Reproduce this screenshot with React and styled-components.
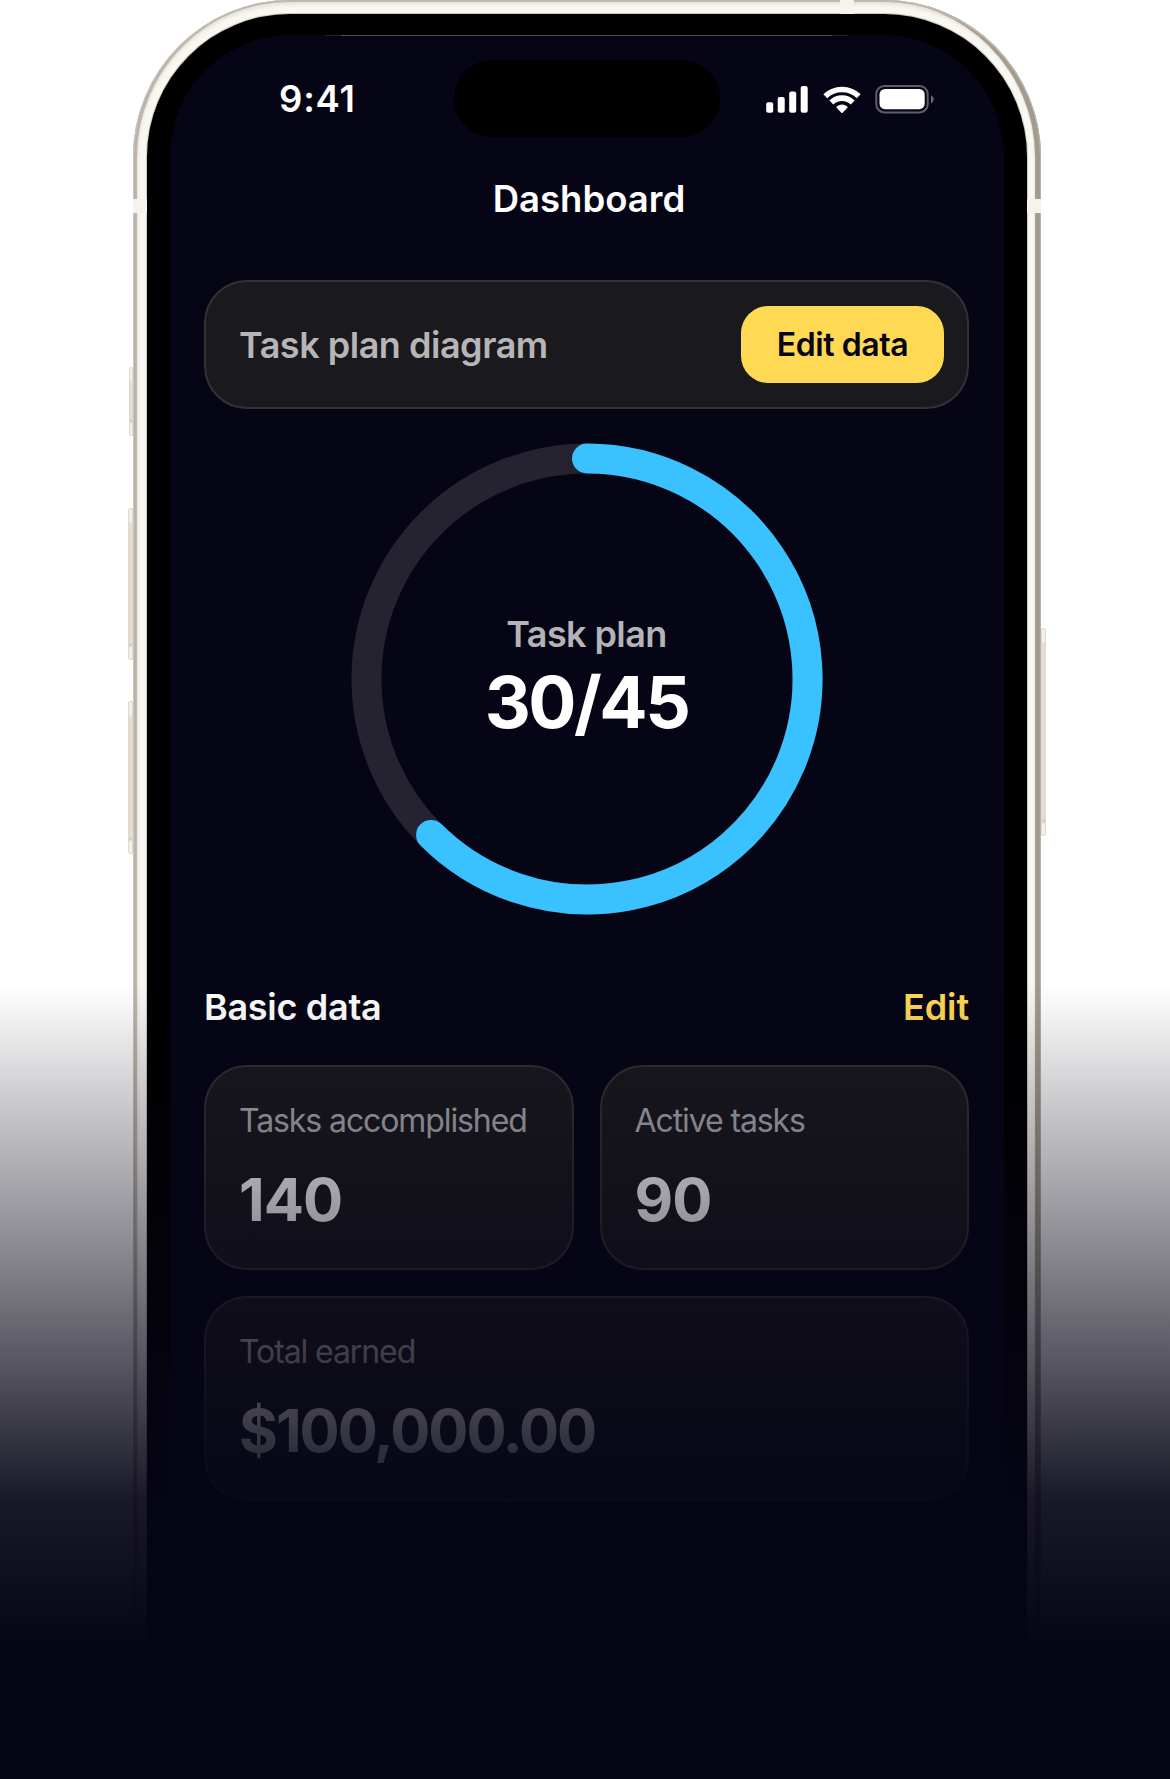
import React from "react";
import styled, { createGlobalStyle } from "styled-components";

const GlobalStyle = createGlobalStyle`
  *, *::before, *::after { box-sizing: border-box; }
  html, body { margin: 0; background: #ffffff; }
  body { font-family: Inter, "Liberation Sans", sans-serif; -webkit-font-smoothing: antialiased; }
`;

const Stage = styled.main`
  position: relative;
  display: flex;
  width: 1170px;
  height: 1779px;
  padding-left: 133px;
  overflow: hidden;
  background: #ffffff;
`;

const Phone = styled.div`
  position: relative;
  flex: none;
  width: 908px;
  height: 1900px;
  padding: 14px 14px 0;
  border-radius: 157px;
  background: #f9f7f2;
  box-shadow:
    inset 1px 0 0 #c9c5c0,
    inset 0 2px 0 #bcb9af,
    inset 4px 0 1px #bbb3aa,
    inset -1px 0 0 #b9b1a5,
    inset -6px 0 1px #a29a8d,
    inset 0 0 3px 5px #eae5dd;
`;

const Bezel = styled.div`
  height: 100%;
  padding: 21px 23px 0;
  border-radius: 143px;
  background: #000000;
  box-shadow: 0 0 0 1px #cfc8bb;
`;

const Screen = styled.div`
  position: relative;
  height: 100%;
  padding: 25px 35px 0 34px;
  border-radius: 121px;
  background: #060515;
`;

const Glint = styled.i`
  position: absolute;
  top: 0;
  left: 155px;
  width: 523px;
  height: 1px;
  background: linear-gradient(90deg, #24242c 16px, #4a4a50 16px, #4a4a50 507px, #24242c 507px);
`;

const SideKey = styled.i`
  position: absolute;
  ${(p) => (p.$side === "left" ? `left: -${p.$depth}px;` : `right: -${p.$depth}px;`)}
  top: ${(p) => p.$top}px;
  width: ${(p) => p.$depth}px;
  height: ${(p) => p.$length}px;
  border: 1px solid #dedad1;
  border-radius: ${(p) => (p.$side === "left" ? "2px 0 0 2px" : "0 2px 2px 0")};
  background: linear-gradient(180deg, #f3f0ea 12px, #e5ddd0 15px, #e5ddd0 calc(100% - 16px), #cfc7ba calc(100% - 14px), #f3f0ea calc(100% - 11px));
`;

const Antenna = styled.i`
  position: absolute;
  left: ${(p) => p.$left}px;
  top: ${(p) => p.$top}px;
  width: 14px;
  height: 14px;
  background: #f4f3ee;
`;

const StatusBar = styled.header`
  display: grid;
  grid-template-columns: 1fr 266px 1fr;
  align-items: center;
  height: 77px;
  margin: 0 -35px 0 -34px;
`;

const Clock = styled.time`
  padding: 2px 0 0 109px;
  color: #ffffff;
  font-size: 36.5px;
  font-weight: 600;
  letter-spacing: 0.8px;
  line-height: 75px;
`;

const Island = styled.div`
  height: 77px;
  border-radius: 39px;
  background: #000000;
`;

const StatusIcons = styled.svg`
  display: block;
  width: 170px;
  height: 30px;
  margin: 3px 0 0 46px;
`;

const Title = styled.h1`
  margin: 37px 0 0;
  padding-left: 5px;
  color: #ffffff;
  font-size: 36.5px;
  font-weight: 600;
  letter-spacing: 0;
  line-height: 50px;
  text-align: center;
`;

const PlanBar = styled.section`
  display: flex;
  align-items: center;
  justify-content: space-between;
  height: 129px;
  margin-top: 56px;
  padding: 0 23px 0 33px;
  border: 2px solid #323136;
  border-radius: 43px;
  background: #1a191e;
`;

const PlanLabel = styled.span`
  color: #b6b5b8;
  font-size: 36px;
  font-weight: 600;
  letter-spacing: -0.48px;
`;

const EditButton = styled.button`
  width: 203px;
  height: 77px;
  padding: 0;
  border: 0;
  border-radius: 27px;
  background: #ffd854;
  color: #060515;
  font: 600 32px Inter, sans-serif;
  letter-spacing: -0.4px;
`;

const Ring = styled.section`
  display: grid;
  place-items: center;
  height: 472px;
  margin-top: 34px;
  > * { grid-area: 1 / 1; }
`;

const RingChart = styled.svg`
  display: block;
  width: 472px;
  height: 472px;
`;

const RingText = styled.div`
  display: flex;
  flex-direction: column;
  align-items: center;
`;

const RingLabel = styled.span`
  color: #b4b4b8;
  font-size: 36px;
  font-weight: 600;
  letter-spacing: -0.6px;
  line-height: 46px;
`;

const RingValue = styled.strong`
  color: #ffffff;
  font-size: 71.5px;
  font-weight: 700;
  letter-spacing: -2.5px;
  line-height: 91px;
`;

const SectionHead = styled.div`
  display: flex;
  justify-content: space-between;
  align-items: center;
  height: 46px;
  margin-top: 69px;
  font-size: 36px;
  font-weight: 600;
  letter-spacing: -0.3px;
`;

const SectionTitle = styled.h2`
  margin: 0;
  color: #ffffff;
  font: inherit;
`;

const EditLink = styled.a`
  color: #ffd854;
  letter-spacing: -0.1px;
`;

const Cards = styled.div`
  display: grid;
  grid-template-columns: repeat(2, minmax(0, 1fr));
  gap: 26px;
  margin-top: 35px;
`;

const Card = styled.article`
  grid-column: ${(p) => (p.$wide ? "1 / -1" : "auto")};
  height: 205px;
  padding: 33px 33px 0;
  border: 2px solid #323136;
  border-radius: 43px;
  background: #1a191e;
`;

const CardLabel = styled.div`
  color: #acacb0;
  font-size: 32px;
  font-weight: 400;
  letter-spacing: -1.1px;
  line-height: 42px;
  white-space: nowrap;
`;

const CardValue = styled.div`
  margin-top: 19px;
  color: #ffffff;
  font-size: 59.5px;
  font-weight: 700;
  letter-spacing: ${(p) => (p.$wide ? "-2px" : "-1px")};
  line-height: 76px;
`;

const Fade = styled.div`
  position: absolute;
  inset: 985px 0 0;
  background: linear-gradient(180deg, rgba(6, 5, 21, 0) 0, rgba(6, 5, 21, 0.92) 515px, #060515 665px);
  pointer-events: none;
`;

const stats = [
  { label: "Tasks accomplished", value: "140" },
  { label: "Active tasks", value: "90" },
  { label: "Total earned", value: "$100,000.00", wide: true },
];

export default function App() {
  return (
    <>
      <GlobalStyle />
      <Stage>
        <Phone>
          <SideKey $side="left" $depth={4} $top={367} $length={69} />
          <SideKey $side="left" $depth={5} $top={508} $length={152} />
          <SideKey $side="left" $depth={5} $top={701} $length={153} />
          <SideKey $side="right" $depth={5} $top={628} $length={208} />
          <Antenna $left={0} $top={199} />
          <Antenna $left={894} $top={199} />
          <Antenna $left={707} $top={0} />
          <Bezel>
            <Screen>
              <Glint />
              <StatusBar>
                <Clock>9:41</Clock>
                <Island />
                <StatusIcons viewBox="0 0 170 30">
                  <g fill="#fff">
                    <rect x="0.2" y="17.3" width="7" height="10.5" rx="2" />
                    <rect x="11.7" y="12" width="7" height="15.8" rx="2" />
                    <rect x="23.2" y="6.5" width="7" height="21.3" rx="2" />
                    <rect x="34.7" y="1" width="7" height="26.8" rx="2" />
                  </g>
                  <g fill="none" stroke="#fff" strokeWidth="5.6">
                    <path d="M59.3 11.2a24 24 0 0 1 33.4 0" />
                    <path d="M65.3 17.5a15.3 15.3 0 0 1 21.4 0" />
                  </g>
                  <path d="M76 27l-4.7-4.8a7.6 7.6 0 0 1 9.4 0z" fill="#fff" stroke="#fff" strokeWidth="1.8" strokeLinejoin="round" />
                  <rect x="110.3" y="1" width="51.4" height="26.4" rx="8" fill="none" stroke="#fff" strokeOpacity=".36" strokeWidth="2" />
                  <rect x="113.5" y="4" width="45.2" height="20.2" rx="5.5" fill="#fff" />
                  <path d="M165 10.3c3.5 1.5 3.5 6.5 0 8z" fill="#fff" fillOpacity=".4" />
                </StatusIcons>
              </StatusBar>
              <Title>Dashboard</Title>
              <PlanBar>
                <PlanLabel>Task plan diagram</PlanLabel>
                <EditButton>Edit data</EditButton>
              </PlanBar>
              <Ring>
                <RingChart viewBox="0 0 472 472" fill="none" strokeWidth="30">
                  <circle cx="236" cy="236" r="220.5" stroke="#24232f" />
                  <path d="M236 15.5A220.5 220.5 0 1 1 80.1 391.9" stroke="#39c2ff" strokeLinecap="round" />
                </RingChart>
                <RingText>
                  <RingLabel>Task plan</RingLabel>
                  <RingValue>30/45</RingValue>
                </RingText>
              </Ring>
              <SectionHead>
                <SectionTitle>Basic data</SectionTitle>
                <EditLink>Edit</EditLink>
              </SectionHead>
              <Cards>
                {stats.map((s) => (
                  <Card key={s.label} $wide={s.wide}>
                    <CardLabel>{s.label}</CardLabel>
                    <CardValue $wide={s.wide}>{s.value}</CardValue>
                  </Card>
                ))}
              </Cards>
            </Screen>
          </Bezel>
        </Phone>
        <Fade />
      </Stage>
    </>
  );
}
